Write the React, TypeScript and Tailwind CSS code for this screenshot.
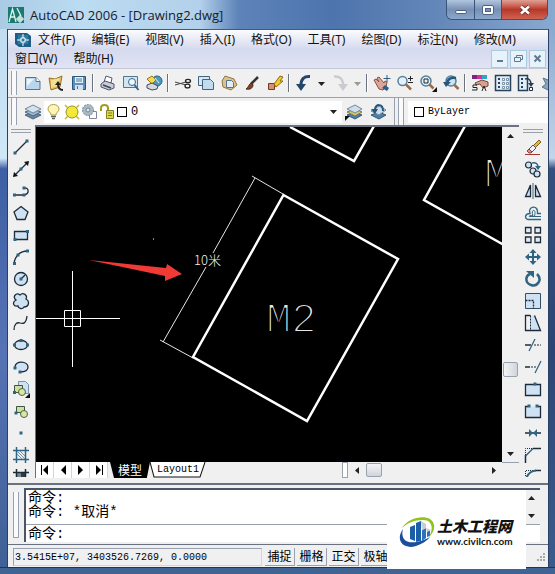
import type { ReactNode } from 'react';

const INK = '#1c2b3a';
const STEEL = '#2f6482';
const PALE = '#cfe2f3';

const MENU_TOP = ['文件(F)', '编辑(E)', '视图(V)', '插入(I)', '格式(O)', '工具(T)', '绘图(D)', '标注(N)', '修改(M)'];
const MENU_BOTTOM = ['窗口(W)', '帮助(H)'];
const STATUS_MODES = ['捕捉', '栅格', '正交', '极轴'];

function Icon({ children }: { children: ReactNode }) {
  return (
    <svg viewBox="0 0 18 18" className="block size-[18px] shrink-0" fill="none" stroke={INK} aria-hidden="true">
      {children}
    </svg>
  );
}

// small square grip drawn on the ends of lines
function Dot({ x, y }: { x: number; y: number }) {
  return <rect x={x - 1.5} y={y - 1.5} width="3" height="3" fill={STEEL} stroke="none" />;
}

interface Tool {
  name: string;
  art: ReactNode;
}

const FILE_TOOLS: Tool[] = [
  {
    name: 'New',
    art: (
      <>
        <path d="M1.500 3.500h10.500l4 4v8h-14.500z" fill="#b9d6ec" stroke="#54758f" />
        <path d="M12 3.500v4h4" fill="#fff" stroke="#54758f" />
        <path d="M3 5h7L3 12z" fill="#eaf5fc" stroke="none" />
      </>
    ),
  },
  {
    name: 'Open',
    art: (
      <>
        <path d="M2 4l6 1 7-3-2 11-9 3z" fill="#e3bd5c" stroke="#987528" />
        <path d="M4 6l9-2-2 8-7 2z" fill="#f6dd91" stroke="none" />
        <path d="M16 16c-3 0-5-2-5-6" stroke="#222" strokeWidth="2" />
        <path d="M8 11l3-4 3 4z" fill="#222" stroke="none" />
      </>
    ),
  },
  {
    name: 'Save',
    art: (
      <>
        <path d="M2.500 2.500h13v13h-13z" fill="#5d8fba" stroke="#2c557a" />
        <path d="M5 3h8v6H5z" fill="#e5f0f7" stroke="none" />
        <path d="M5 11h8v5H5z" fill="#d3e1ec" stroke="none" />
        <path d="M6 5h6M6 7h6M7.500 12v3" stroke="#47789f" />
      </>
    ),
  },
];

const PRINT_TOOLS: Tool[] = [
  {
    name: 'Plot',
    art: (
      <>
        <path d="M5 8l2-6 6 2-1 5z" fill="#fff" stroke="#557" />
        <path d="M2 10l4-3 9 3v4l-5 2-8-3z" fill="#c7ccd6" stroke="#4d5668" />
        <path d="M4 11l8 3" stroke="#3d475a" strokeWidth="1.500" />
      </>
    ),
  },
  {
    name: 'Preview',
    art: (
      <>
        <path d="M1.500 2.500h14v11h-14z" fill="#d4e5f2" stroke="#54758f" />
        <circle cx="10" cy="8" r="3.500" fill="#f1f9ff" stroke="#33658c" />
        <path d="M12.500 11l4 5" stroke="#33658c" strokeWidth="2" />
      </>
    ),
  },
  {
    name: 'Publish',
    art: (
      <>
        <circle cx="12" cy="7" r="5" fill="#4b9ac1" stroke="#25607f" />
        <path d="M2 5l5-3 4 4-4 4z" fill="#f6d94c" stroke="#94751a" />
        <path d="M2 11l5-2 6 3-1 3-5 1-5-2z" fill="#d5d9df" stroke="#424b58" />
        <path d="M10 4l4 5" stroke="#e6f3f8" />
      </>
    ),
  },
];

const EDIT_TOOLS: Tool[] = [
  {
    name: 'Cut',
    art: (
      <>
        <path d="M1 8l11 3M1 11l11-3" stroke="#444" />
        <ellipse cx="14" cy="7" rx="2.500" ry="1.700" stroke="#222" strokeWidth="1.300" />
        <ellipse cx="13.500" cy="12" rx="2.500" ry="1.900" stroke="#222" strokeWidth="1.300" />
      </>
    ),
  },
  {
    name: 'Copy',
    art: (
      <>
        <path d="M1.500 2.500h11v9h-11z" fill="#d6e7f3" stroke="#42657f" />
        <path d="M5.500 5.500h8l3 3v7h-11z" fill="#c2dcef" stroke="#42657f" />
      </>
    ),
  },
  {
    name: 'Paste',
    art: (
      <>
        <path d="M5 2l9 3 3 6-6 5-8-3-1-6z" fill="#dac18d" stroke="#927743" />
        <path d="M6.500 6.500h5l2 2v5h-7z" fill="#e1eef7" stroke="#54758f" />
      </>
    ),
  },
  {
    name: 'Match Properties',
    art: (
      <>
        <path d="M15 3L8 10" stroke="#333" strokeWidth="2.500" />
        <path d="M9 9c-3 0-3 4-6 6 4 1 7-1 7-4z" fill="#7f4424" stroke="#4d2a17" />
      </>
    ),
  },
  {
    name: 'Block Editor',
    art: (
      <>
        <path d="M2.500 9.500h6v6h-6z" fill="#d98d75" stroke="#743a28" />
        <path d="M8 10l6-8 3 1-3 4h3l-7 6z" fill="#f4c629" stroke="#8e6c10" />
      </>
    ),
  },
];

const ZOOM_TOOLS: Tool[] = [
  {
    name: 'Pan',
    art: (
      <>
        <path d="M1 6l2-1 3 3-2-4 2-1 5 6 1-2 2 1-1 5-3 3-4-1z" fill="#dca79b" stroke="#8d4f44" />
        <path d="M9 14l3-3 4 3-2 3z" fill="#315d80" stroke="none" />
        <path d="M14 1v7M10.500 4.500h7" stroke="#315d80" />
      </>
    ),
  },
  {
    name: 'Zoom Realtime',
    art: (
      <>
        <circle cx="6.500" cy="7" r="4.500" fill="#e3f2fa" stroke="#557f9e" strokeWidth="1.500" />
        <path d="M10 10.500l5 5" stroke="#9b6c46" strokeWidth="2.500" />
        <path d="M12 4.500h5M14.500 2v5M12 8.500h5" stroke="#222" />
      </>
    ),
  },
  {
    name: 'Zoom Window',
    art: (
      <>
        <circle cx="7" cy="7" r="5" fill="#e3f2fa" stroke="#557f9e" strokeWidth="1.500" />
        <path d="M5 5h4v4H5z" stroke="#222" />
        <path d="M10.500 10.500l4 4" stroke="#9b6c46" strokeWidth="2.500" />
        <path d="M18 13v5h-5z" fill="#111" stroke="none" />
      </>
    ),
  },
  {
    name: 'Zoom Previous',
    art: (
      <>
        <circle cx="9" cy="7" r="5" fill="#cde3ef" stroke="#557f9e" strokeWidth="1.500" />
        <path d="M12.500 11l4 4" stroke="#9b6c46" strokeWidth="2.500" />
        <path d="M14 4C9 3 6 5 5 9" stroke="#24577c" strokeWidth="2.500" />
        <path d="M1 8h8l-5 5z" fill="#24577c" stroke="none" />
      </>
    ),
  },
];

const PALETTE_TOOLS: Tool[] = [
  {
    name: 'Properties',
    art: (
      <>
        <path d="M1 1h5v4H1z" fill="#7b2687" stroke="none" />
        <path d="M6 1h5v4H6z" fill="#d92f9b" stroke="none" />
        <path d="M11 1h5v4h-5z" fill="#2ea2c9" stroke="none" />
        <path d="M4 9l7-3 6 2v4l-5 2-3-4-4 1z" fill="#d9a08f" stroke="#74463c" />
        <path d="M6 11H2v2.500h4V16H1M11 17l2-5 2 5" stroke="#222" />
      </>
    ),
  },
  {
    name: 'DesignCenter',
    art: (
      <>
        <path d="M1.500 1.500h15v15h-15z" fill="#e3edf5" stroke="#24415c" strokeWidth="1.500" />
        <path d="M4 4h2v2H4zM4 8h2v2H4zM4 12h2v2H4z" fill="#24415c" stroke="none" />
        <path d="M8.500 4.500h2v2h-2zM8.500 8.500h2v2h-2zM8.500 12.500h2v2h-2zM12.500 4.500h2v2h-2zM12.500 8.500h2v2h-2zM12.500 12.500h2v2h-2z" fill="#fff" stroke="#5d7c93" strokeWidth="0.800" />
      </>
    ),
  },
  {
    name: 'Tool Palettes',
    art: (
      <>
        <path d="M1.500 1.500h9v15h-9z" fill="#e3edf5" stroke="#24415c" strokeWidth="1.500" />
        <path d="M4 4h2v2H4zM4 8h2v2H4zM4 12h2v2H4z" fill="#24415c" stroke="none" />
        <path d="M8 5c4-1 6 1 6 6" stroke="#24415c" strokeWidth="1.500" />
        <path d="M11 9l3 4 3-4z" fill="#24415c" stroke="none" />
        <path d="M12.500 13.500h3v3h-3z" fill="#fff" />
      </>
    ),
  },
  {
    name: 'Sheet Set Manager',
    art: <path d="M3 4l5 2 3-3 4 2-7 11-6-3 4-3z" fill="#8ba6b8" stroke="#5b7688" />,
  },
];

const DRAW_TOOLS: Tool[] = [
  {
    name: 'Line',
    art: (
      <>
        <path d="M3 15L15 3" strokeWidth="1.300" />
        <Dot x={3} y={15} />
        <Dot x={15} y={3} />
      </>
    ),
  },
  {
    name: 'Construction Line',
    art: (
      <>
        <path d="M2 16L16 2" strokeWidth="1.300" />
        <path d="M1 17l1-5 4 4zM17 1l-1 5-4-4z" fill="#111" stroke="none" />
        <Dot x={9} y={9} />
      </>
    ),
  },
  {
    name: 'Polyline',
    art: (
      <>
        <path d="M2 13h10c6-1 5-8 0-7" strokeWidth="1.300" />
        <Dot x={2.5} y={13} />
        <Dot x={12} y={13} />
        <Dot x={12} y={6} />
      </>
    ),
  },
  {
    name: 'Polygon',
    art: <path d="M9 2.500l7 5.500-3 7.500H5L2 8z" fill={PALE} strokeWidth="1.300" />,
  },
  {
    name: 'Rectangle',
    art: (
      <>
        <path d="M2.500 5.500h13v8h-13z" fill={PALE} strokeWidth="1.300" />
        <Dot x={3} y={13.5} />
        <Dot x={15.5} y={5.5} />
      </>
    ),
  },
  {
    name: 'Arc',
    art: (
      <>
        <path d="M2 15.500C3 8 8 3 15.500 3" strokeWidth="1.300" />
        <Dot x={2.5} y={15.5} />
        <Dot x={6} y={7} />
        <Dot x={15.5} y={3} />
      </>
    ),
  },
  {
    name: 'Circle',
    art: (
      <>
        <circle cx="9" cy="9" r="6.500" fill={PALE} strokeWidth="1.300" />
        <path d="M9 9l4-4" strokeWidth="1.300" />
        <Dot x={9} y={9} />
      </>
    ),
  },
  {
    name: 'Revision Cloud',
    art: (
      <path
        d="M4 8C0 5 4 0 8 3c3-3 8 0 6 4 4 2 3 8-2 8-2 3-6 1-6-1-5 1-6-4-2-6z"
        fill={PALE}
        strokeWidth="1.300"
      />
    ),
  },
  {
    name: 'Spline',
    art: <path d="M2 16c0-6 3-8 6-7s6 1 7-7" strokeWidth="1.300" />,
  },
  {
    name: 'Ellipse',
    art: (
      <>
        <ellipse cx="9" cy="9" rx="6.500" ry="4.500" fill={PALE} strokeWidth="1.300" />
        <Dot x={2.5} y={9} />
        <Dot x={15.5} y={9} />
        <Dot x={9} y={4.5} />
      </>
    ),
  },
  {
    name: 'Ellipse Arc',
    art: (
      <>
        <path d="M3 9c0-7 13-6 13 0 0 4-4 5-8 5" fill={PALE} strokeWidth="1.300" />
        <Dot x={3} y={10} />
        <Dot x={8} y={14} />
      </>
    ),
  },
  {
    name: 'Insert Block',
    art: (
      <>
        <path d="M6.500 1.500h7l3 3v9h-10z" fill={PALE} stroke="#7593a8" />
        <path d="M2.500 5.500h8v7h-8z" fill="#cfe09a" stroke="#3b5540" />
        <circle cx="10" cy="12" r="3.500" fill="#d9e6a5" stroke="#4c6449" />
        <Dot x={2.5} y={12.5} />
        <path d="M18 13v5h-5z" fill="#111" stroke="none" />
      </>
    ),
  },
  {
    name: 'Make Block',
    art: (
      <>
        <path d="M4.500 4.500h8v6h-8z" fill="#cfe09a" stroke="#3b5540" />
        <circle cx="12" cy="12" r="3.500" fill="#d9e6a5" stroke="#4c6449" />
        <Dot x={4} y={11} />
      </>
    ),
  },
  { name: 'Point', art: <Dot x={9} y={9} /> },
  {
    name: 'Hatch',
    art: (
      <>
        <path d="M4.500 1v16M13.500 1v16M1 4.500h16M1 13.500h16" stroke={STEEL} strokeWidth="1.500" />
        <path d="M5 8l5 5M5 5l8 8M8 5l5 5" stroke="#6590aa" />
      </>
    ),
  },
  {
    name: 'Gradient',
    art: (
      <>
        <path d="M4 4h10v8H4z" fill="#7d868f" stroke="none" />
        <path d="M9 4h5v8H9z" fill="#333b44" stroke="none" />
        <path d="M1 4.500h16M4.500 1v11M13.500 1v11" strokeWidth="1.500" />
      </>
    ),
  },
];

const MODIFY_TOOLS: Tool[] = [
  {
    name: 'Erase',
    art: (
      <>
        <path d="M9 8l6-6 2 2-6 6z" fill="#e6b53c" stroke="#81601b" />
        <path d="M5 11l4-4 3 3-4 4z" fill="#f2f2f2" stroke="#555" />
        <path d="M5 11l-2 2 2 2h2l1-1z" fill="#df8f88" stroke="#7b4743" />
        <path d="M1 16.500h15" stroke="#a43535" />
      </>
    ),
  },
  {
    name: 'Copy Object',
    art: (
      <>
        <circle cx="4.500" cy="5" r="3" fill={PALE} strokeWidth="1.200" />
        <circle cx="9" cy="11" r="3" fill={PALE} strokeWidth="1.200" />
        <circle cx="13" cy="14" r="3" fill={PALE} strokeWidth="1.200" />
        <path d="M8 3c4-1 6 1 6 4" stroke={STEEL} strokeWidth="1.500" />
        <path d="M11 6h6l-3 4z" fill={STEEL} stroke="none" />
      </>
    ),
  },
  {
    name: 'Mirror',
    art: (
      <>
        <path d="M6.500 3v11.500h-5zM11.500 3v11.500h5z" fill={PALE} strokeWidth="1.300" />
        <path d="M9 1v16" stroke="#3d6279" />
      </>
    ),
  },
  {
    name: 'Offset',
    art: (
      <>
        <path d="M17 15.500H4c-4-1-3-6 2-6C3 2 15 0 13.500 9.500H17" stroke={STEEL} strokeWidth="1.400" />
        <path d="M17 12.500H6c-2 0-1-1 3-1C6 5 13 4 10.500 12" stroke={STEEL} />
      </>
    ),
  },
  {
    name: 'Array',
    art: (
      <path
        d="M1.500 1.500h5.500v5.500H1.500zM11 1.500h5.500v5.500H11zM1.500 11h5.500v5.500H1.500zM11 11h5.500v5.500H11z"
        fill="#e3ebf2"
        strokeWidth="1.300"
      />
    ),
  },
  {
    name: 'Move',
    art: (
      <>
        <path d="M9 3v12M3 9h12" stroke={STEEL} strokeWidth="2" />
        <path d="M9 1l3.500 4h-7zM9 17l3.500-4h-7zM1 9l4-3.500v7zM17 9l-4-3.500v7z" fill={STEEL} stroke="none" />
      </>
    ),
  },
  {
    name: 'Rotate',
    art: (
      <>
        <path d="M13 4c6 6 0 13-6 11C1 13 1 6 6 4" stroke={STEEL} strokeWidth="2.500" />
        <path d="M2 1h8v7z" fill={STEEL} stroke="none" />
      </>
    ),
  },
  {
    name: 'Scale',
    art: (
      <>
        <path d="M1.500 1.500h15v15h-15z" fill={PALE} stroke="#334f66" />
        <path d="M1.500 8.500h8v8" strokeDasharray="2 1" strokeWidth="1.300" />
      </>
    ),
  },
  {
    name: 'Stretch',
    art: (
      <>
        <path d="M6.500 1.500l4 0 6 15h-10z" fill={PALE} stroke="none" />
        <path d="M6.500 1.500h-5v15h15l-6-15" strokeWidth="1.300" />
        <path d="M6.500 1.500v15" strokeDasharray="2 1" />
      </>
    ),
  },
  {
    name: 'Trim',
    art: (
      <>
        <path d="M1 9h6" strokeWidth="1.500" />
        <path d="M10 9h7" strokeDasharray="2 1" />
        <path d="M5 15l6-12" stroke={STEEL} strokeWidth="1.300" />
      </>
    ),
  },
  {
    name: 'Extend',
    art: (
      <>
        <path d="M1 9h5" strokeWidth="1.500" />
        <path d="M7 9h5" strokeDasharray="2 1" />
        <path d="M11 15l6-12" stroke={STEEL} strokeWidth="1.300" />
      </>
    ),
  },
  {
    name: 'Break at Point',
    art: (
      <>
        <path d="M1.500 4.500h15v11h-15z" fill={PALE} strokeWidth="1.300" />
        <Dot x={11} y={4} />
      </>
    ),
  },
  {
    name: 'Break',
    art: (
      <>
        <path d="M4 4.500H1.500v11h15v-11H14" fill={PALE} strokeWidth="1.300" />
        <Dot x={5} y={4} />
        <Dot x={13} y={4} />
      </>
    ),
  },
  {
    name: 'Join',
    art: (
      <>
        <path d="M1 9h16" strokeWidth="1.500" />
        <path d="M5 5l4 4-4 4zM13 5L9 9l4 4z" fill={STEEL} stroke="none" />
      </>
    ),
  },
  {
    name: 'Chamfer',
    art: (
      <>
        <path d="M17 2.500H9M1.500 17V9" strokeWidth="1.500" />
        <path d="M1.500 9V2.500H9" strokeDasharray="1 1" />
        <path d="M1.500 10L9 2.500" stroke={STEEL} strokeWidth="1.500" />
      </>
    ),
  },
  {
    name: 'Fillet',
    art: (
      <>
        <path d="M17 2.500h-6" strokeWidth="1.500" />
        <path d="M1.500 12V2.500H11" strokeDasharray="1 1" />
        <path d="M1.500 13C3 6 6 3 12 2.500" stroke={STEEL} strokeWidth="2" />
      </>
    ),
  },
];

function ToolRow({ tools }: { tools: Tool[] }) {
  return (
    <>
      {tools.map((tool) => (
        <button key={tool.name} type="button" aria-label={tool.name} className="flex h-6 w-[23px] shrink-0 items-center justify-center">
          <Icon>{tool.art}</Icon>
        </button>
      ))}
    </>
  );
}

function ToolColumn({ label, tools }: { label: string; tools: Tool[] }) {
  return (
    <div role="toolbar" aria-label={label} className="flex w-[26px] shrink-0 flex-col items-center">
      <div className="my-1 h-1 w-5 border-y border-gray-400" />
      {tools.map((tool, i) => (
        <button
          key={tool.name}
          type="button"
          aria-label={tool.name}
          className={`flex w-full justify-center overflow-hidden pt-px ${i === tools.length - 1 ? 'h-2.5' : 'h-[22px]'}`}
        >
          <Icon>{tool.art}</Icon>
        </button>
      ))}
    </div>
  );
}

function Grip() {
  return <div className="mr-1 ml-[3px] w-1.5 shrink-0 self-stretch border-x border-gray-400 bg-gray-50" />;
}

function Divider() {
  return <div className="mx-[2px] h-[18px] w-[2px] shrink-0 border-l border-gray-500 bg-white" />;
}

function Arrow({ dir, dim = false }: { dir: 'up' | 'down' | 'left' | 'right'; dim?: boolean }) {
  const paths = {
    up: 'M1 6h7L4.500 2z',
    down: 'M1 3h7L4.500 7z',
    left: 'M6 1v7L2 4.500z',
    right: 'M3 1v7l4-3.500z',
  };
  return (
    <svg viewBox="0 0 9 9" className="block size-[9px]" aria-hidden="true">
      <path d={paths[dir]} fill={dim ? '#999' : '#222'} />
    </svg>
  );
}

function TitleBar() {
  return (
    <header className="flex h-[29px] items-start bg-[linear-gradient(to_right,#a9cbe4_0%,#bcdcf2_15%,#b3d1ea_36%,#5d83b9_43%,#4d74ad_60%,#6286b8_78%,#8aa9cf_100%)] pr-[7px] pl-2">
      <div className="flex flex-1 items-center gap-1.5 pt-1">
        <svg viewBox="0 0 16 16" className="size-4" aria-hidden="true">
          <path d="M0 0h16v16H0z" fill="#1b7a70" />
          <path d="M1 15L4.500 2 8 15M3 10h4M9 1l4 8" stroke="#dff5ee" fill="none" strokeWidth="1.300" />
          <path d="M8 12h8M12 8v8M10 10h4v4h-4z" stroke="#fff" fill="none" />
        </svg>
        <h1 className="font-[Open_Sans,Noto_Sans,sans-serif] text-[13px] leading-[22px] text-[#15202e]">AutoCAD 2006 - [Drawing2.dwg]</h1>
      </div>
      <div className="flex h-5 overflow-hidden rounded-b-md border border-t-0 border-[#3c5377]">
        <button type="button" aria-label="Minimize" className="flex w-7 items-center justify-center border-r border-[#3c5377] bg-linear-to-b from-[#b3c6df] via-[#7790b6] to-[#8ba7cc]">
          <span className="mt-1 h-1 w-3 rounded-xs border border-[#50627f] bg-white" />
        </button>
        <button type="button" aria-label="Maximize" className="flex w-[27px] items-center justify-center border-r border-[#3c5377] bg-linear-to-b from-[#b3c6df] via-[#7790b6] to-[#8ba7cc]">
          <span className="flex h-2.5 w-3 items-center justify-center rounded-xs border border-[#50627f] bg-white">
            <span className="h-1 w-1.5 border border-[#50627f] bg-[#7790b6]" />
          </span>
        </button>
        <button type="button" aria-label="Close" className="flex w-[45px] items-center justify-center bg-linear-to-b from-[#dfa195] via-[#b8372b] to-[#d0624f]">
          <svg viewBox="0 0 12 10" className="h-2.5 w-3" aria-hidden="true">
            <path d="M2 1.500l8 7M10 1.500l-8 7" stroke="#5d2a2a" strokeWidth="4" />
            <path d="M2 1.500l8 7M10 1.500l-8 7" stroke="#fff" strokeWidth="2.500" />
          </svg>
        </button>
      </div>
    </header>
  );
}

function MenuBar() {
  return (
    <nav className="border-t border-b border-t-[#405a7c] border-b-[#c2c8d8] bg-[linear-gradient(to_bottom,#fbfcfe,#e8ebf6_25%,#d5daee_50%,#dfe3f3)] font-[Noto_Sans,Noto_Sans_CJK_SC,sans-serif] text-xs leading-[19px] text-[#111]">
      <div className="flex items-center gap-4 pl-[7px] whitespace-nowrap">
        <div className="flex items-center gap-[7px]">
          <svg viewBox="0 0 16 16" className="size-4" aria-hidden="true">
            <path d="M0 1h12l4 3v11H4L0 12z" fill="#1f5e86" />
            <path d="M3 3h10v9H3z" fill="#2c7ba3" />
            <path d="M2 8h12M8 2v12" stroke="#fff" />
            <path d="M6 6h4v4H6z" stroke="#fff" fill="#2c7ba3" />
          </svg>
          <button type="button">{MENU_TOP[0]}</button>
        </div>
        {MENU_TOP.slice(1).map((item) => (
          <button key={item} type="button">{item}</button>
        ))}
      </div>
      <div className="flex items-center pl-[7px]">
        <div className="flex flex-1 gap-4">
          {MENU_BOTTOM.map((item) => (
            <button key={item} type="button">{item}</button>
          ))}
        </div>
        <div className="flex gap-0.5 pr-0.5">
          <button type="button" aria-label="Minimize drawing" className="flex h-[18px] w-[17px] items-center justify-center border border-[#a9cbe0] bg-[#e7f3fb]">
            <span className="mt-1 h-0.5 w-1.5 bg-[#60798f]" />
          </button>
          <button type="button" aria-label="Restore drawing" className="flex h-[18px] w-[17px] items-center justify-center border border-[#a9cbe0] bg-[#e7f3fb]">
            <svg viewBox="0 0 9 9" className="size-[9px]" fill="none" stroke="#60798f" aria-hidden="true">
              <path d="M2.500 3V1.500h6v4H7M.5 3.500h6v4h-6z" />
            </svg>
          </button>
          <button type="button" aria-label="Close drawing" className="flex h-[18px] w-[17px] items-center justify-center border border-[#a9cbe0] bg-[#e7f3fb]">
            <svg viewBox="0 0 9 9" className="size-[9px]" stroke="#60798f" strokeWidth="2" aria-hidden="true">
              <path d="M1.500 1.500l6 6M7.500 1.500l-6 6" />
            </svg>
          </button>
        </div>
      </div>
    </nav>
  );
}

function StandardToolbar() {
  return (
    <div role="toolbar" aria-label="Standard" className="flex h-[29px] items-center overflow-hidden border-b border-gray-400 bg-[#f1f0f1] py-0.5">
      <Grip />
      <ToolRow tools={FILE_TOOLS} />
      <Divider />
      <ToolRow tools={PRINT_TOOLS} />
      <Divider />
      <ToolRow tools={EDIT_TOOLS} />
      <Divider />
      <button type="button" aria-label="Undo" className="flex h-6 w-[23px] shrink-0 items-center justify-center">
        <Icon>
          <path d="M15 2.500C9 2 6 5 6 11" stroke="#25466b" strokeWidth="3" />
          <path d="M1 10h10l-5 7z" fill="#25466b" stroke="none" />
        </Icon>
      </button>
      <button type="button" aria-label="Undo list" className="flex w-[13px] shrink-0 justify-center">
        <Arrow dir="down" />
      </button>
      <button type="button" aria-label="Redo" className="flex h-6 w-[23px] shrink-0 items-center justify-center">
        <Icon>
          <path d="M3 2.500c6-.5 9 2.500 9 8.500" stroke="#c8ccd0" strokeWidth="2.500" />
          <path d="M7 10h10l-5 7z" fill="#c8ccd0" stroke="none" />
        </Icon>
      </button>
      <button type="button" aria-label="Redo list" className="flex w-[13px] shrink-0 justify-center">
        <Arrow dir="down" dim />
      </button>
      <Divider />
      <ToolRow tools={ZOOM_TOOLS} />
      <Divider />
      <ToolRow tools={PALETTE_TOOLS} />
    </div>
  );
}

function LayersToolbar() {
  return (
    <div className="flex h-[27px] items-center bg-[#f1f0f1] font-[Liberation_Mono,monospace] text-xs text-black">
      <Grip />
      <button type="button" aria-label="Layer Properties Manager" className="flex w-[23px] shrink-0 justify-center">
        <Icon>
          <path d="M1 12l8-3 8 3-8 4z" fill="#6c87a0" stroke="#4b657e" />
          <path d="M1 9l8-3 8 3-8 4z" fill="#9fb8cc" stroke="#4b657e" />
          <path d="M1 6l8-4 8 4-8 4z" fill="#d5e2ec" stroke="#6c87a0" />
        </Icon>
      </button>
      <div className="relative flex h-[22px] min-w-0 flex-[304] items-center bg-white pl-px">
        <Icon>
          <path d="M6 12c0-3-3-3-3-6 0-6 11-6 11 0 0 3-3 3-3 6z" fill="#fdf6b5" stroke="#b09a4d" />
          <path d="M6 13.500h5M7 15.500h3" stroke="#5a6069" strokeWidth="1.500" />
        </Icon>
        <Icon>
          <path d="M2 2l14 14M16 2L2 16" stroke="#c7b933" strokeWidth="1.500" />
          <circle cx="9" cy="9" r="6" fill="#f4ea36" stroke="#989035" />
        </Icon>
        <Icon>
          <path d="M8.500 8.500h7v7h-7z" fill="#fff" stroke="#7c8b96" />
          <circle cx="7" cy="7" r="5.500" fill="#a9bac4" stroke="#6f8591" strokeDasharray="2 1" />
          <circle cx="7" cy="7" r="2" fill="#dfe7eb" stroke="#6f8591" />
        </Icon>
        <Icon>
          <path d="M2 8V5c0-4 7-4 7 0v4" stroke="#a39a22" strokeWidth="2" />
          <path d="M7.500 7.500h7v8h-7z" fill="#dcd64a" stroke="#857f20" />
          <path d="M9 10h4M9 12.500h4" stroke="#857f20" />
        </Icon>
        <span className="size-2.5 shrink-0 border border-black bg-white" />
        <select aria-label="Layer" className="min-w-0 flex-1 appearance-none bg-transparent pl-1 outline-none">
          <option>0</option>
        </select>
        <span className="pointer-events-none absolute right-1">
          <Arrow dir="down" />
        </span>
      </div>
      <button type="button" aria-label="Make Object's Layer Current" className="flex w-6 shrink-0 justify-center">
        <Icon>
          <path d="M2 12l8-3 7 3-7 4z" fill="#4e7fa8" stroke="#35597a" />
          <path d="M2 9l8-3 7 3-7 4z" fill="#d7c867" stroke="#857a35" />
          <path d="M2 6l8-4 7 4-7 4z" fill="#cfdee9" stroke="#6c87a0" />
          <path d="M0 18v-5l5 0z" fill="#111" stroke="none" />
        </Icon>
      </button>
      <button type="button" aria-label="Layer Previous" className="flex w-6 shrink-0 justify-center">
        <Icon>
          <path d="M2 12l8-3 7 3-7 4z" fill="#4e7fa8" stroke="#35597a" />
          <path d="M2 8l8-5 7 4-7 5z" fill="#cfdee9" stroke="#6c87a0" />
          <path d="M14 8c0-8-7-7-8-2" stroke="#24577c" strokeWidth="2" />
          <path d="M2 6h7l-3 5z" fill="#24577c" stroke="none" />
        </Icon>
      </button>
      <div className="ml-1 h-full w-px bg-gray-400" />
      <Grip />
      <div className="flex h-[22px] min-w-0 flex-[137] items-center bg-white pl-1.5 text-[10px]">
        <span className="size-2.5 shrink-0 border border-black bg-white" />
        <select aria-label="Color" className="min-w-0 flex-1 appearance-none bg-transparent pl-1 outline-none">
          <option>ByLayer</option>
        </select>
      </div>
    </div>
  );
}

function Drawing() {
  return (
    <svg viewBox="36 127 466 334" className="block w-full bg-black" fill="none" stroke="#fff">
      <g strokeWidth="2.500">
        <path d="M283.500 195L398 259l-91 162-114-64z" />
        <path d="M290 127l64 34 20-35M465 126l-41 74 80 45" />
      </g>
      <path d="M252 176l31 18M160 340l33 18M255 178l-42 75M206 267l-43 75" strokeWidth="0.900" />
      <path d="M36 318.500h84M72.500 271v96M64.500 310.500h16v16h-16z" />
      <path d="M153 239h1" />
      <path d="M89 260l77 8 1-4 15 10-17 7v-5z" fill="#f03a36" stroke="none" />
      <text x="194" y="265" fill="#fff" stroke="none" className="font-[Noto_Sans_CJK_SC,sans-serif] text-[13px] font-light opacity-95">10米</text>
      {/* the black outline thins the letters down to plotter strokes */}
      <g fill="#fff" stroke="#000" strokeWidth="2" className="font-[Liberation_Mono,monospace] text-[42px] opacity-90">
        <text x="266" y="332">M2</text>
        <text x="484" y="187">M</text>
      </g>
    </svg>
  );
}

function SheetTabs() {
  return (
    <div className="flex h-4 items-stretch bg-[#f0f0f0]">
      {['First', 'Previous', 'Next', 'Last'].map((name, i) => (
        <button key={name} type="button" aria-label={`${name} layout`} className="flex w-[18px] items-center justify-center border-r border-gray-300 bg-white">
          <svg viewBox="0 0 12 12" className="size-3" fill="#000" aria-hidden="true">
            {i < 2 ? <path d="M9 1v10L4 6z" /> : <path d="M3 1v10l5-5z" />}
            {i === 0 && <path d="M2 1h1v10H2z" />}
            {i === 3 && <path d="M9 1h1v10H9z" />}
          </svg>
        </button>
      ))}
      <button type="button" className="ml-0.5 bg-black px-2 font-[Noto_Sans_CJK_SC,sans-serif] text-xs leading-4 text-white [clip-path:polygon(0_0,100%_0,92%_100%,10%_100%)]">
        模型
      </button>
      <div className="relative flex">
        <svg viewBox="0 0 56 16" className="absolute inset-0 size-full" preserveAspectRatio="none" aria-hidden="true">
          <path d="M0 0l4 15h46l5-15" fill="#fff" stroke="#111" />
        </svg>
        <button type="button" className="relative px-[7px] font-[Liberation_Mono,monospace] text-[10px] leading-4 text-black">
          Layout1
        </button>
      </div>
      <div className="flex-[136]" />
      <div className="w-1.5 border border-gray-400 bg-white" />
      <button type="button" aria-label="Scroll left" className="flex w-[18px] items-center justify-center">
        <Arrow dir="left" />
      </button>
      <div className="my-px w-4 rounded-xs border border-gray-400 bg-linear-to-b from-gray-100 to-gray-300" />
      <div className="flex-[102]" />
      <button type="button" aria-label="Scroll right" className="flex w-[18px] items-center justify-center">
        <Arrow dir="right" />
      </button>
    </div>
  );
}

function Workspace() {
  return (
    <div className="flex flex-1 gap-px bg-[#f1f0f1] pb-[5px]">
      <ToolColumn label="Draw" tools={DRAW_TOOLS} />
      <main className="flex min-w-0 flex-1 border-t-2 border-l border-gray-500">
        <div className="flex min-w-0 flex-1 flex-col">
          <div className="flex-1 bg-black">
            <Drawing />
          </div>
          <SheetTabs />
        </div>
        <div className="flex w-[17px] shrink-0 flex-col items-center bg-[#f0f0f0]">
          <button type="button" aria-label="Scroll up" className="flex h-[18px] items-center">
            <Arrow dir="up" />
          </button>
          <div className="flex-[217]" />
          <div className="h-[15px] w-[15px] rounded-xs border border-gray-400 bg-linear-to-r from-gray-100 to-gray-300" />
          <div className="flex-[67]" />
          <button type="button" aria-label="Scroll down" className="flex h-[18px] items-center">
            <Arrow dir="down" />
          </button>
          <div className="h-4 w-full border-t border-gray-400" />
        </div>
      </main>
      <div className="pr-0.5">
        <ToolColumn label="Modify" tools={MODIFY_TOOLS} />
      </div>
    </div>
  );
}

function CommandWindow() {
  return (
    <section aria-label="Command line" className="flex border-t-2 border-gray-500 bg-[#f1f0f1] pt-[3px] pr-2 pb-0.5">
      <div className="mx-[5px] my-1 w-1.5 border-x border-b border-gray-400 bg-gray-50" />
      <div className="flex min-w-0 flex-1 flex-col border-t-2 border-l-2 border-gray-600 bg-white font-[Liberation_Mono,Noto_Sans_CJK_SC,monospace] text-sm leading-[14px] text-black">
        <div className="flex border-b border-gray-400">
          <div className="h-[34px] flex-1 pt-px pl-0.5 whitespace-pre">
            <p>命令:</p>
            <p>命令: *取消*</p>
          </div>
          <div className="flex w-[17px] flex-col items-center justify-between bg-[#f0f0f0] py-1">
            <Arrow dir="up" />
            <Arrow dir="down" />
          </div>
        </div>
        <div className="flex h-[17px] items-center pl-0.5">
          <label htmlFor="command">命令:</label>
          <input id="command" className="min-w-0 flex-1 bg-transparent outline-none" />
        </div>
      </div>
    </section>
  );
}

function StatusBar() {
  return (
    <footer className="flex h-[23px] items-center border-t border-gray-500 bg-[#f1f0f1] pt-px pl-[5px] text-xs text-black">
      <div className="mr-[3px] h-[18px] w-[249px] border border-t-gray-400 border-r-gray-300 border-b-gray-300 border-l-gray-400 pl-px font-[Liberation_Mono,monospace] text-[10px] leading-[18px]">
        3.5415E+07, 3403526.7269, 0.0000
      </div>
      <div className="flex gap-0.5">
        {STATUS_MODES.map((mode) => (
          <button key={mode} type="button" className="h-[18px] w-[30px] border-r border-b border-gray-400 font-[Noto_Sans_CJK_SC,sans-serif] leading-4">
            {mode}
          </button>
        ))}
      </div>
      <svg viewBox="0 0 10 10" className="mr-0.5 ml-auto size-2.5" fill="#aaa" aria-hidden="true">
        <path d="M7 1h2v2H7zM4 4h2v2H4zM7 4h2v2H7zM1 7h2v2H1zM4 7h2v2H4zM7 7h2v2H7z" />
      </svg>
    </footer>
  );
}

function SiteBadge() {
  return (
    <a href="#civilcn" className="absolute right-[29px] bottom-[5px] flex h-[79px] w-[139px] items-center bg-white pt-1 pl-3">
      <svg viewBox="0 0 38 32" className="h-8 w-[38px] shrink-0" aria-hidden="true">
        <path d="M11 23V11l5-2v16zM17 26V7l5-2v20z" fill="#1c5fa8" />
        <path d="M23 25V14l4-2v10zM28 21v-6l3-1v6z" fill="#2a73bb" />
        <path d="M22 5l5 3v4l-4 2zM27 12l5 2-4 2z" fill="#c9ced4" />
        <path d="M3 12C10 0 33-3 35 9c1 5-2 9-5 12 5-9 3-17-6-17C15 4 8 7 3 12z" fill="#8fc31f" />
        <path d="M4 13c-8 11 0 21 13 17 6-2 11-5 14-9-8 5-22 8-26 2-2-3-2-6-1-10z" fill="#1b4f9c" />
      </svg>
      <span className="flex flex-col text-[#111]">
        <span className="font-[Noto_Sans_CJK_SC,sans-serif] text-[15px] leading-[18px] font-black whitespace-nowrap italic">土木工程网</span>
        <span className="font-[Lato,sans-serif] text-[10px] leading-3 font-bold">www.civilcn.com</span>
      </span>
    </a>
  );
}

export default function App() {
  return (
    <div className="relative flex min-h-screen w-full flex-col bg-[#3f6196]">
      <TitleBar />
      <div className="flex flex-1">
        <div className="w-[7px] shrink-0 bg-[linear-gradient(to_bottom,#bfdcf1_0%,#cfe8f8_24%,#3e5fa3_26%,#5673b5_60%,#3f6196_100%)]" />
        <div className="flex min-w-0 flex-1 flex-col border-x border-[#2c3f66]">
          <MenuBar />
          <StandardToolbar />
          <LayersToolbar />
          <Workspace />
          <CommandWindow />
          <StatusBar />
        </div>
        <div className="w-1.5 shrink-0 bg-[linear-gradient(to_bottom,#8aa9cf_0%,#c3d6e8_24%,#33507f_26%,#2c4674_60%,#3a5c8d_100%)]" />
      </div>
      <div className="h-[7px] border-t border-[#1d3558] bg-[#3f6392]" />
      <SiteBadge />
    </div>
  );
}
